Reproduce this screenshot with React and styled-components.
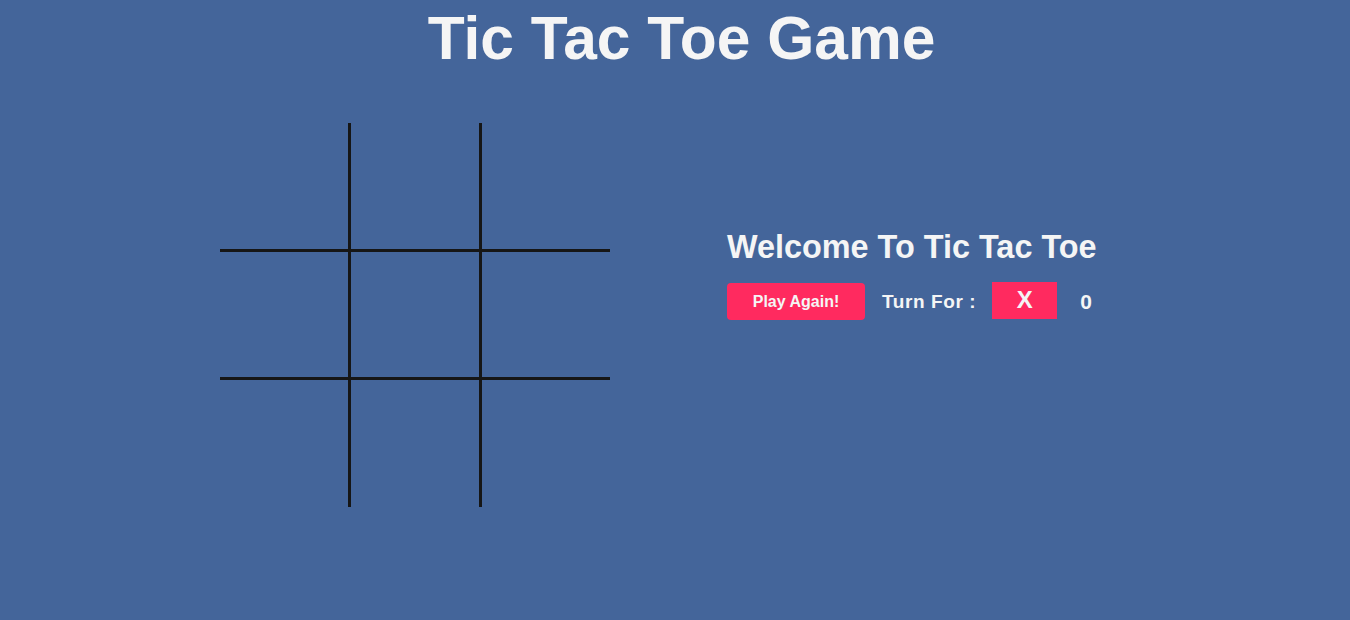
import React, { useState } from 'react';
import styled, { createGlobalStyle } from 'styled-components';

const GlobalStyle = createGlobalStyle`
  html, body {
    margin: 0;
    padding: 0;
    background: #44659a;
    font-family: "Liberation Sans", Arial, sans-serif;
  }
`;

const Page = styled.div`
  min-height: 620px;
  padding-top: 4px;
  color: #f5f5f5;
`;

const Title = styled.h1`
  margin: 0;
  padding-left: 13px;
  text-align: center;
  font-size: 60.5px;
  line-height: 68px;
  font-weight: 700;
`;

const Main = styled.main`
  display: flex;
  align-items: flex-start;
  gap: 117px;
  margin-top: 51px;
  padding-left: 220px;
`;

const Board = styled.div`
  display: grid;
  grid-template-columns: 128px 134px 128px;
  grid-template-rows: 126px 131px 127px;
`;

const Cell = styled.button`
  box-sizing: border-box;
  margin: 0;
  padding: 0;
  background: transparent;
  border: 0 solid #161616;
  border-left-width: ${({ $col }) => ($col === 1 ? '3px' : 0)};
  border-right-width: ${({ $col }) => ($col === 1 ? '3px' : 0)};
  border-top-width: ${({ $row }) => ($row === 1 ? '3px' : 0)};
  border-bottom-width: ${({ $row }) => ($row === 1 ? '3px' : 0)};
  color: #f5f5f5;
  font: 700 64px "Liberation Sans", Arial, sans-serif;
  cursor: pointer;
`;

const Panel = styled.section`
  margin-top: 106px;
`;

const Welcome = styled.h2`
  margin: 0 0 17px;
  font-size: 32.4px;
  font-weight: 700;
`;

const Controls = styled.div`
  display: flex;
  align-items: center;
`;

const ResetButton = styled.button`
  width: 138px;
  height: 37px;
  border: none;
  border-radius: 4px;
  background: #ff2a5f;
  color: #f5f5f5;
  font: 700 16px "Liberation Sans", Arial, sans-serif;
  cursor: pointer;
`;

const TurnLabel = styled.span`
  margin-left: 17px;
  font-size: 19px;
  font-weight: 700;
  letter-spacing: 0.6px;
`;

const TurnBox = styled.div`
  display: flex;
  align-items: center;
  justify-content: center;
  width: 65px;
  height: 37px;
  margin-left: 16px;
  margin-top: -3px;
  background: #ff2a5f;
  font-size: 24px;
  font-weight: 700;
`;

const Score = styled.span`
  margin-left: 23px;
  font-size: 21px;
  font-weight: 700;
`;

export default function App() {
  const [cells, setCells] = useState(Array(9).fill(''));
  const [turn, setTurn] = useState('X');
  const [moves, setMoves] = useState(0);

  const play = (i) => {
    if (cells[i]) return;
    const next = [...cells];
    next[i] = turn;
    setCells(next);
    setTurn(turn === 'X' ? 'O' : 'X');
    setMoves(moves + 1);
  };

  const reset = () => {
    setCells(Array(9).fill(''));
    setTurn('X');
    setMoves(0);
  };

  return (
    <Page>
      <GlobalStyle />
      <Title>Tic Tac Toe Game</Title>
      <Main>
        <Board>
          {cells.map((value, i) => (
            <Cell
              key={i}
              $row={Math.floor(i / 3)}
              $col={i % 3}
              onClick={() => play(i)}
            >
              {value}
            </Cell>
          ))}
        </Board>
        <Panel>
          <Welcome>Welcome To Tic Tac Toe</Welcome>
          <Controls>
            <ResetButton onClick={reset}>Play Again!</ResetButton>
            <TurnLabel>Turn For :</TurnLabel>
            <TurnBox>{turn}</TurnBox>
            <Score>{moves}</Score>
          </Controls>
        </Panel>
      </Main>
    </Page>
  );
}
